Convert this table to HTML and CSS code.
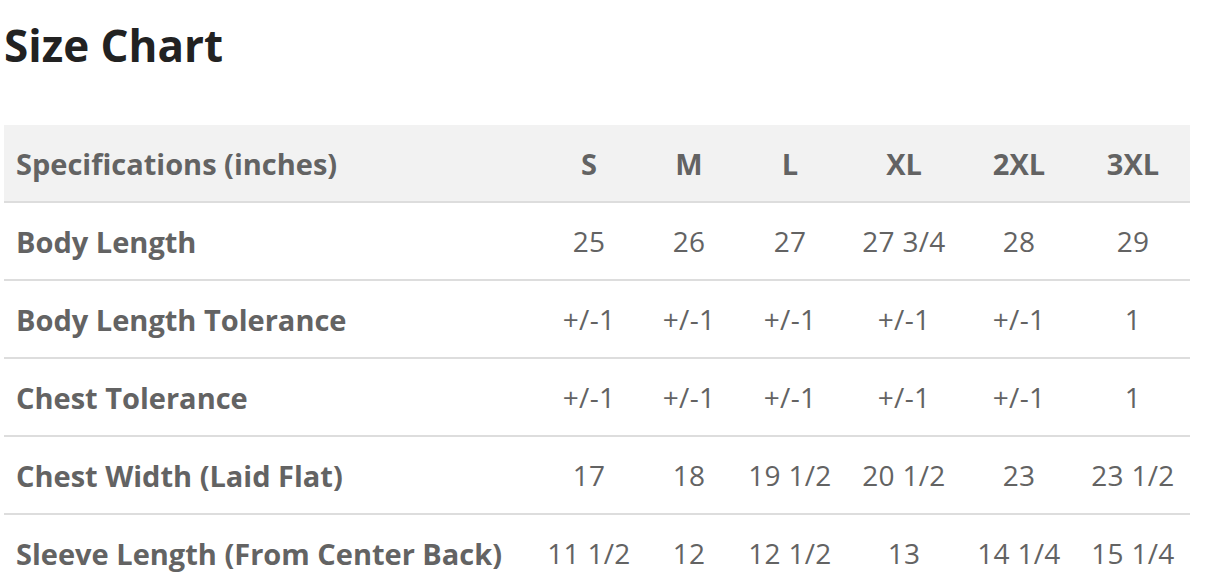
FILE: index.html
```html
<!DOCTYPE html>
<html>
<head>
<meta charset="utf-8">
<link rel="stylesheet" href="styles.css">
</head>
<body>
<div class="page">
  <h1 class="title">Size Chart</h1>
  <table class="chart">
    <colgroup>
      <col class="c-spec">
      <col class="c-s">
      <col class="c-m">
      <col class="c-l">
      <col class="c-xl">
      <col class="c-2xl">
      <col class="c-3xl">
    </colgroup>
    <thead>
      <tr>
        <th class="label">Specifications (inches)</th>
        <th>S</th><th>M</th><th>L</th><th>XL</th><th>2XL</th><th class="last">3XL</th>
      </tr>
    </thead>
    <tbody>
      <tr>
        <th class="label">Body Length</th>
        <td>25</td><td>26</td><td>27</td><td>27 3/4</td><td>28</td><td class="last">29</td>
      </tr>
      <tr>
        <th class="label">Body Length Tolerance</th>
        <td>+/-1</td><td>+/-1</td><td>+/-1</td><td>+/-1</td><td>+/-1</td><td class="last">1</td>
      </tr>
      <tr>
        <th class="label">Chest Tolerance</th>
        <td>+/-1</td><td>+/-1</td><td>+/-1</td><td>+/-1</td><td>+/-1</td><td class="last">1</td>
      </tr>
      <tr>
        <th class="label">Chest Width (Laid Flat)</th>
        <td>17</td><td>18</td><td>19 1/2</td><td>20 1/2</td><td>23</td><td class="last">23 1/2</td>
      </tr>
      <tr>
        <th class="label">Sleeve Length (From Center Back)</th>
        <td>11 1/2</td><td>12</td><td>12 1/2</td><td>13</td><td>14 1/4</td><td class="last">15 1/4</td>
      </tr>
    </tbody>
  </table>
</div>
</body>
</html>
```
FILE: styles.css
```css
html, body {
  margin: 0;
  padding: 0;
  background: #ffffff;
}
body {
  font-family: "Open Sans", Lato, sans-serif;
  color: #636363;
}
.page {
  padding: 0 0 0 4px;
}
.title {
  margin: 0;
  padding: 17px 0 52px 0;
  font-size: 44px;
  line-height: 56px;
  font-weight: 700;
  color: #222222;
}
.chart {
  width: 1186px;
  border-collapse: collapse;
  table-layout: fixed;
}
.c-spec { width: 535px; }
.c-s { width: 100px; }
.c-m { width: 100px; }
.c-l { width: 102px; }
.c-xl { width: 126px; }
.c-2xl { width: 104px; }
.c-3xl { width: 119px; }
.chart thead tr {
  background: #f2f2f2;
}
.chart th,
.chart td {
  padding: 0;
  text-align: center;
  border-bottom: 2px solid #dddddd;
  white-space: nowrap;
}
.chart .last {
  padding-left: 5px;
}
.chart thead th {
  height: 76px;
  font-size: 29px;
  font-weight: 700;
}
.chart tbody th,
.chart tbody td {
  height: 76px;
}
.chart th.label {
  text-align: left;
  padding-left: 12px;
  font-size: 29px;
  font-weight: 700;
}
.chart td {
  font-size: 28px;
  font-weight: 400;
  letter-spacing: 0.3px;
}
.chart tbody tr:last-child th,
.chart tbody tr:last-child td {
  border-bottom: none;
}
```
